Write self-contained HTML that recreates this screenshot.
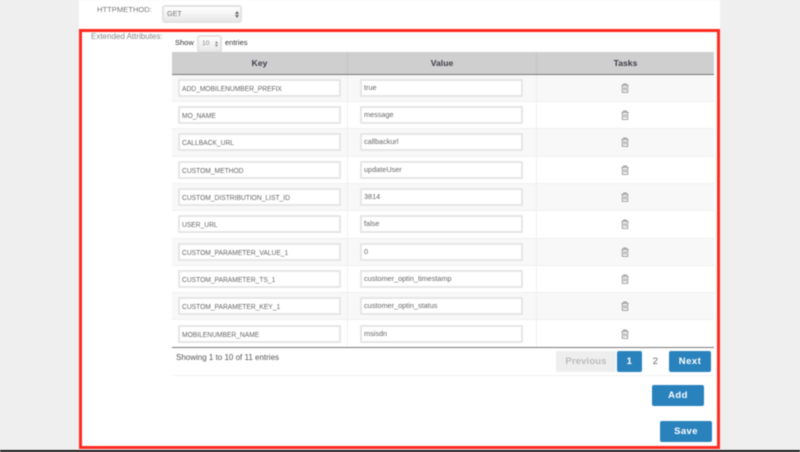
<!DOCTYPE html>
<html><head><meta charset="utf-8"><style>
html,body{margin:0;padding:0}
body{width:800px;height:452px;overflow:hidden;background:#efefef;font-family:"Liberation Sans",sans-serif;color:#555;position:relative}
div,span{position:absolute;box-sizing:border-box;white-space:nowrap}
#w{left:0;top:0;width:800px;height:452px;filter:blur(.45px)}
.t{font-size:8px;line-height:10px}
.in{height:18px;background:#fff;border:2px solid #e6e6e6;border-radius:1px;line-height:14px;padding-left:2px;color:#666}
.k{left:178px;width:163px;font-size:7.6px}.v{left:360px;width:163px;font-size:7.3px}
.k span{left:2px;top:0;line-height:15px;transform:scaleX(.88);transform-origin:0 50%}
.r{left:172px;width:542px;height:27px;border-bottom:1px solid #f0f0f0}
.o{background:#f8f8f8}
.c{top:0;width:1px;height:100%;background:#f0f0f0}
.th{top:52px;height:22px;font-size:8.5px;font-weight:bold;line-height:22px;text-align:center;color:#3c3c46;letter-spacing:.05px}
.b{background:#2a82bd;color:#fff;border-radius:2px;font-size:9.5px;font-weight:bold;text-align:center;line-height:21px;height:21px;letter-spacing:.4px}
.sel{background:linear-gradient(#fff,#e8e8e8);border:2px solid #e2e2e2;border-radius:3px;color:#777}
svg.i{position:absolute;left:621px}
</style></head><body><div id="w">
<div style="left:79px;top:0;width:641px;height:450px;background:#fff"></div>
<div style="left:0;top:450px;width:800px;height:2px;background:#111"></div>
<div style="left:79px;top:29px;width:641px;height:420px;border:3px solid #ff2a20"></div>

<div class="t" style="left:97px;top:5px;color:#777;font-size:7.6px">HTTPMETHOD:</div>
<div class="sel" style="left:162px;top:5px;width:80px;height:18px;line-height:14px;padding-left:3px;font-size:7.2px">GET</div>
<svg style="position:absolute;left:235px;top:11px" width="4" height="7"><path d="M0 3L2 0L4 3ZM0 4L2 7L4 4Z" fill="#666"/></svg>
<div class="t" style="left:91px;top:32px;color:#888;font-size:8px">Extended Attributes:</div>
<div class="t" style="left:175px;top:38px;font-size:7.5px;color:#333">Show</div>
<div class="sel" style="left:197px;top:35px;width:25px;height:18px;line-height:14px;padding-left:3px;font-size:6.8px;color:#888">10</div>
<svg style="position:absolute;left:215px;top:41px" width="3" height="6"><path d="M0 2.500L1.500 0L3 2.500ZM0 3.500L1.500 6L3 3.500Z" fill="#888"/></svg>
<div class="t" style="left:225px;top:38px;font-size:7.5px;color:#333">entries</div>

<div style="left:172px;top:52px;width:542px;height:23px;background:#cfcfcf;border-bottom:1.5px solid #777"></div>
<div style="left:347px;top:52px;width:1px;height:22px;background:#c4c4c4"></div>
<div style="left:536px;top:52px;width:1px;height:22px;background:#c4c4c4"></div>
<div class="th" style="left:172px;width:175px">Key</div>
<div class="th" style="left:347px;width:190px">Value</div>
<div class="th" style="left:537px;width:177px">Tasks</div>

<div class="r o" style="top:75px;height:27px"><div class="c" style="left:175px"></div><div class="c" style="left:364px"></div></div>
<div class="r" style="top:102px"><div class="c" style="left:175px"></div><div class="c" style="left:364px"></div></div>
<div class="r o" style="top:129px;height:28px"><div class="c" style="left:175px"></div><div class="c" style="left:364px"></div></div>
<div class="r" style="top:157px"><div class="c" style="left:175px"></div><div class="c" style="left:364px"></div></div>
<div class="r o" style="top:184px"><div class="c" style="left:175px"></div><div class="c" style="left:364px"></div></div>
<div class="r" style="top:211px;height:28px"><div class="c" style="left:175px"></div><div class="c" style="left:364px"></div></div>
<div class="r o" style="top:239px"><div class="c" style="left:175px"></div><div class="c" style="left:364px"></div></div>
<div class="r" style="top:266px"><div class="c" style="left:175px"></div><div class="c" style="left:364px"></div></div>
<div class="r o" style="top:293px;height:27px"><div class="c" style="left:175px"></div><div class="c" style="left:364px"></div></div>
<div class="r" style="top:320px;height:27px;border:0"><div class="c" style="left:175px"></div><div class="c" style="left:364px"></div></div>
<div style="left:172px;top:347px;width:542px;height:1px;background:#777"></div>

<div class="in k" style="top:79px"><span>ADD_MOBILENUMBER_PREFIX</span></div><div class="in v" style="top:79px">true</div>
<div class="in k" style="top:106px"><span>MO_NAME</span></div><div class="in v" style="top:106px">message</div>
<div class="in k" style="top:133px"><span>CALLBACK_URL</span></div><div class="in v" style="top:133px">callbackurl</div>
<div class="in k" style="top:161px"><span>CUSTOM_METHOD</span></div><div class="in v" style="top:161px">updateUser</div>
<div class="in k" style="top:188px"><span>CUSTOM_DISTRIBUTION_LIST_ID</span></div><div class="in v" style="top:188px">3814</div>
<div class="in k" style="top:215px"><span>USER_URL</span></div><div class="in v" style="top:215px">false</div>
<div class="in k" style="top:243px"><span>CUSTOM_PARAMETER_VALUE_1</span></div><div class="in v" style="top:243px">0</div>
<div class="in k" style="top:270px"><span>CUSTOM_PARAMETER_TS_1</span></div><div class="in v" style="top:270px">customer_optin_timestamp</div>
<div class="in k" style="top:297px"><span>CUSTOM_PARAMETER_KEY_1</span></div><div class="in v" style="top:297px">customer_optin_status</div>
<div class="in k" style="top:325px"><span>MOBILENUMBER_NAME</span></div><div class="in v" style="top:325px">msisdn</div>

<svg width="0" height="0" style="position:absolute"><defs><g id="tr" fill="none" stroke="#999" stroke-width="1.1"><path d="M.5 2.500h8M3 2.500V1h3v1.500M1.500 2.500v8h6v-8M3.500 4.500v4M5.500 4.500v4"/></g></defs></svg>
<svg class="i" style="top:83px" width="8" height="10" viewBox="0 0 9 11"><use href="#tr"/></svg>
<svg class="i" style="top:110px" width="8" height="10" viewBox="0 0 9 11"><use href="#tr"/></svg>
<svg class="i" style="top:137px" width="8" height="10" viewBox="0 0 9 11"><use href="#tr"/></svg>
<svg class="i" style="top:165px" width="8" height="10" viewBox="0 0 9 11"><use href="#tr"/></svg>
<svg class="i" style="top:192px" width="8" height="10" viewBox="0 0 9 11"><use href="#tr"/></svg>
<svg class="i" style="top:219px" width="8" height="10" viewBox="0 0 9 11"><use href="#tr"/></svg>
<svg class="i" style="top:247px" width="8" height="10" viewBox="0 0 9 11"><use href="#tr"/></svg>
<svg class="i" style="top:274px" width="8" height="10" viewBox="0 0 9 11"><use href="#tr"/></svg>
<svg class="i" style="top:301px" width="8" height="10" viewBox="0 0 9 11"><use href="#tr"/></svg>
<svg class="i" style="top:329px" width="8" height="10" viewBox="0 0 9 11"><use href="#tr"/></svg>

<div class="t" style="left:176px;top:353px;font-size:8px;color:#555">Showing 1 to 10 of 11 entries</div>
<div style="left:172px;top:375px;width:542px;height:1px;background:#f2f2f2"></div>
<div class="b" style="left:556px;top:351px;width:60px;background:#eee;color:#bbb;letter-spacing:.15px">Previous</div>
<div class="b" style="left:617px;top:351px;width:25px">1</div>
<div class="b" style="left:643px;top:351px;width:25px;background:none;color:#666;font-weight:normal">2</div>
<div class="b" style="left:669px;top:351px;width:42px;letter-spacing:.5px">Next</div>
<div class="b" style="left:652px;top:385px;width:52px">Add</div>
<div class="b" style="left:660px;top:421px;width:52px">Save</div>
</div></body></html>
